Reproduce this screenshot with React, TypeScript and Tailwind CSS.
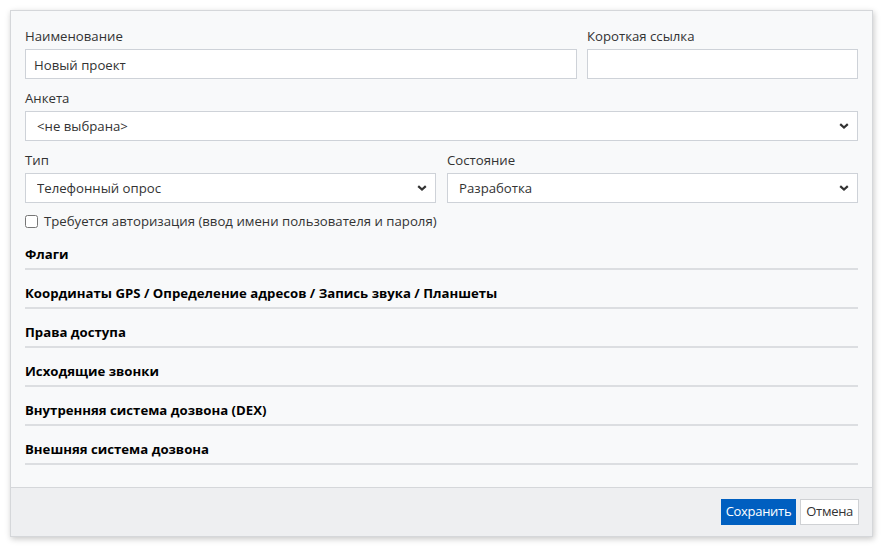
import { useState } from 'react'

const font = { fontFamily: '"Open Sans", "Noto Sans", sans-serif' }

function Chevron() {
  return (
    <svg width="10" height="7" viewBox="0 0 10 7" className="pointer-events-none absolute right-[9px] top-1/2 -translate-y-1/2">
      <path d="M1.2 1.6 L5 5 L8.8 1.6" fill="none" stroke="#333" strokeWidth="2.2" />
    </svg>
  )
}

function Select({ value, options }: { value: string; options: string[] }) {
  return (
    <div className="relative">
      <select
        defaultValue={value}
        className="h-[30px] w-full appearance-none border border-[#ced2d8] bg-white pl-[11px] pr-8 pt-[1px] text-[13.2px] text-[#333] outline-none"
      >
        {options.map(o => <option key={o}>{o}</option>)}
      </select>
      <Chevron />
    </div>
  )
}

const sections = [
  'Флаги',
  'Координаты GPS / Определение адресов / Запись звука / Планшеты',
  'Права доступа',
  'Исходящие звонки',
  'Внутренняя система дозвона (DEX)',
  'Внешняя система дозвона',
]

export default function App() {
  const [name, setName] = useState('Новый проект')
  const [link, setLink] = useState('')
  const [auth, setAuth] = useState(false)

  return (
    <div className="min-h-screen bg-white p-[10px]" style={font}>
      <div className="w-[863px] border border-[#d5d7da] bg-[#f8f9fa] shadow-[1px_2px_6px_rgba(0,0,0,0.22)]">
        <div className="px-[14px] pt-[15px] pb-[22px] text-[13.2px] text-[#333]">
          <div className="flex gap-[10px]">
            <div className="w-[552px]">
              <div className="mb-[3px] leading-[20px]">Наименование</div>
              <input
                value={name}
                onChange={e => setName(e.target.value)}
                className="h-[30px] w-full border border-[#ced2d8] bg-white px-[8px] pt-[1px] text-[13.2px] text-[#333] outline-none"
              />
            </div>
            <div className="flex-1">
              <div className="mb-[3px] leading-[20px]">Короткая ссылка</div>
              <input
                value={link}
                onChange={e => setLink(e.target.value)}
                className="h-[30px] w-full border border-[#ced2d8] bg-white px-[8px] text-[13.2px] text-[#333] outline-none"
              />
            </div>
          </div>

          <div className="mt-[9px]">
            <div className="mb-[3px] leading-[20px]">Анкета</div>
            <Select value="<не выбрана>" options={['<не выбрана>']} />
          </div>

          <div className="mt-[9px] flex gap-[11px]">
            <div className="flex-1">
              <div className="mb-[3px] leading-[20px]">Тип</div>
              <Select value="Телефонный опрос" options={['Телефонный опрос', 'Личный опрос', 'Онлайн опрос']} />
            </div>
            <div className="flex-1">
              <div className="mb-[3px] leading-[20px]">Состояние</div>
              <Select value="Разработка" options={['Разработка', 'Активен', 'Завершён']} />
            </div>
          </div>

          <label className="mt-[8px] flex h-[20px] items-center gap-[6px] leading-[20px]">
            <input
              type="checkbox"
              checked={auth}
              onChange={e => setAuth(e.target.checked)}
              className="m-0 h-[13px] w-[13px]"
            />
            Требуется авторизация (ввод имени пользователя и пароля)
          </label>

          <div className="mt-[13px] flex flex-col gap-[13px]">
            {sections.map(s => (
              <div key={s} className="border-b-2 border-[#dcdee1] pb-[4px] text-[13.2px] font-bold leading-[20px] text-black">
                {s}
              </div>
            ))}
          </div>
        </div>

        <div className="flex h-[49px] items-center justify-end gap-[4px] border-t border-[#d5d7da] bg-[#eeeff1] px-[13px] pb-[1px]">
          <button className="h-[26px] bg-[#005fc0] px-[5px] text-[13px] tracking-[-0.3px] text-white">Сохранить</button>
          <button className="h-[26px] border border-[#cfd1d4] bg-white px-[5px] text-[13px] tracking-[-0.3px] text-[#333]">Отмена</button>
        </div>
      </div>
    </div>
  )
}
